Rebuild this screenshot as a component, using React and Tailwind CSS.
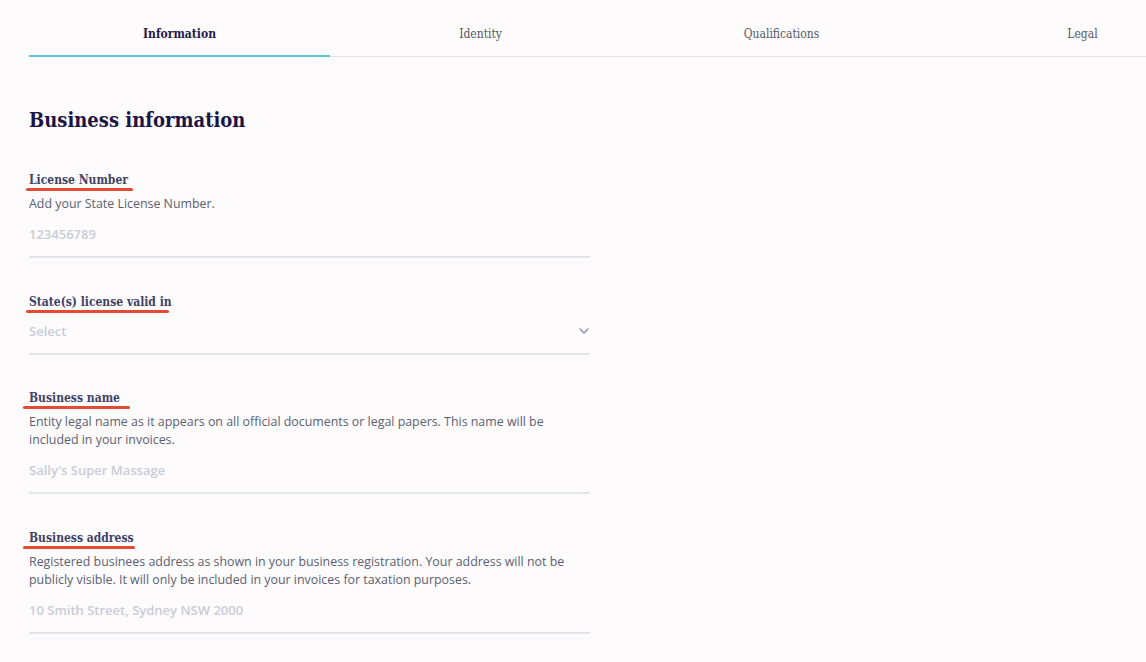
import { ChevronDown } from 'lucide-react';

const SLAB = { fontFamily: '"DejaVu Serif Condensed", "DejaVu Serif", serif', fontStretch: 'condensed' };

const tabs = ['Information', 'Identity', 'Qualifications', 'Legal'];

const fields = [
  {
    label: 'License Number',
    desc: ['Add your State License Number.'],
    value: '123456789',
    mark: 'left-[-3px] w-[107px]',
  },
  {
    label: 'State(s) license valid in',
    value: 'Select',
    select: true,
    mark: 'left-[-3px] w-[143px]',
  },
  {
    label: 'Business name',
    desc: ['Entity legal name as it appears on all official documents or legal papers. This name will be', 'included in your invoices.'],
    value: "Sally's Super Massage",
    mark: 'left-[-6px] w-[107px]',
  },
  {
    label: 'Business address',
    desc: ['Registered businees address as shown in your business registration. Your address will not be', 'publicly visible. It will only be included in your invoices for taxation purposes.'],
    value: '10 Smith Street, Sydney NSW 2000',
    mark: 'left-[-6px] w-[112px]',
  },
];

function Field({ f, first }) {
  return (
    <div className={first ? 'mt-[38px]' : 'mt-[35.5px]'}>
      <div className="relative">
        <div className="text-[12px] leading-[16px] font-bold text-[#3d4266]" style={SLAB}>{f.label}</div>
        {/* red review marks */}
        <div className={'absolute top-[16px] h-[3px] rounded-full bg-[#e24a33] ' + f.mark}></div>
      </div>
      {f.desc && (
        <div className="mt-[7px] text-[12.4px] leading-[18px] text-[#5b5f72]">
          {f.desc.map((d) => <div key={d}>{d}</div>)}
        </div>
      )}
      <div className="flex items-center justify-between pt-[11px] pb-[12px] border-b-2 border-[#e2e4eb] leading-[20px]">
        <span className="text-[13px] font-semibold text-[#c9ccd8]">{f.value}</span>
        {f.select && <ChevronDown size={16} strokeWidth={2} className="text-[#8b90a4] mr-[-2px]" />}
      </div>
    </div>
  );
}

export default function App() {
  return (
    <div className="w-[1146px] h-[662px] overflow-hidden bg-[#fdfbfc]" style={{ fontFamily: '"Open Sans", sans-serif' }}>
      <div className="flex ml-[29px] w-[1204px] border-b border-[#e3e3ea] h-[57px]">
        {tabs.map((t, i) => (
          <div
            key={t}
            className={
              'w-[301px] flex items-center justify-center pt-[12px] ' +
              (i === 0 ? 'border-b-2 border-[#5ec4d8] -mb-px' : '')
            }
          >
            <span
              className={'text-[12px] ' + (i === 0 ? 'font-bold text-[#1f1a4a]' : 'text-[#555866]')}
              style={SLAB}
            >
              {t}
            </span>
          </div>
        ))}
      </div>

      <div className="ml-[29px] w-[561px]">
        <h1 className="mt-[49px] text-[20px] leading-[28px] font-bold text-[#1b1546]" style={SLAB}>
          Business information
        </h1>
        {fields.map((f, i) => <Field key={f.label} f={f} first={i === 0} />)}
      </div>
    </div>
  );
}
